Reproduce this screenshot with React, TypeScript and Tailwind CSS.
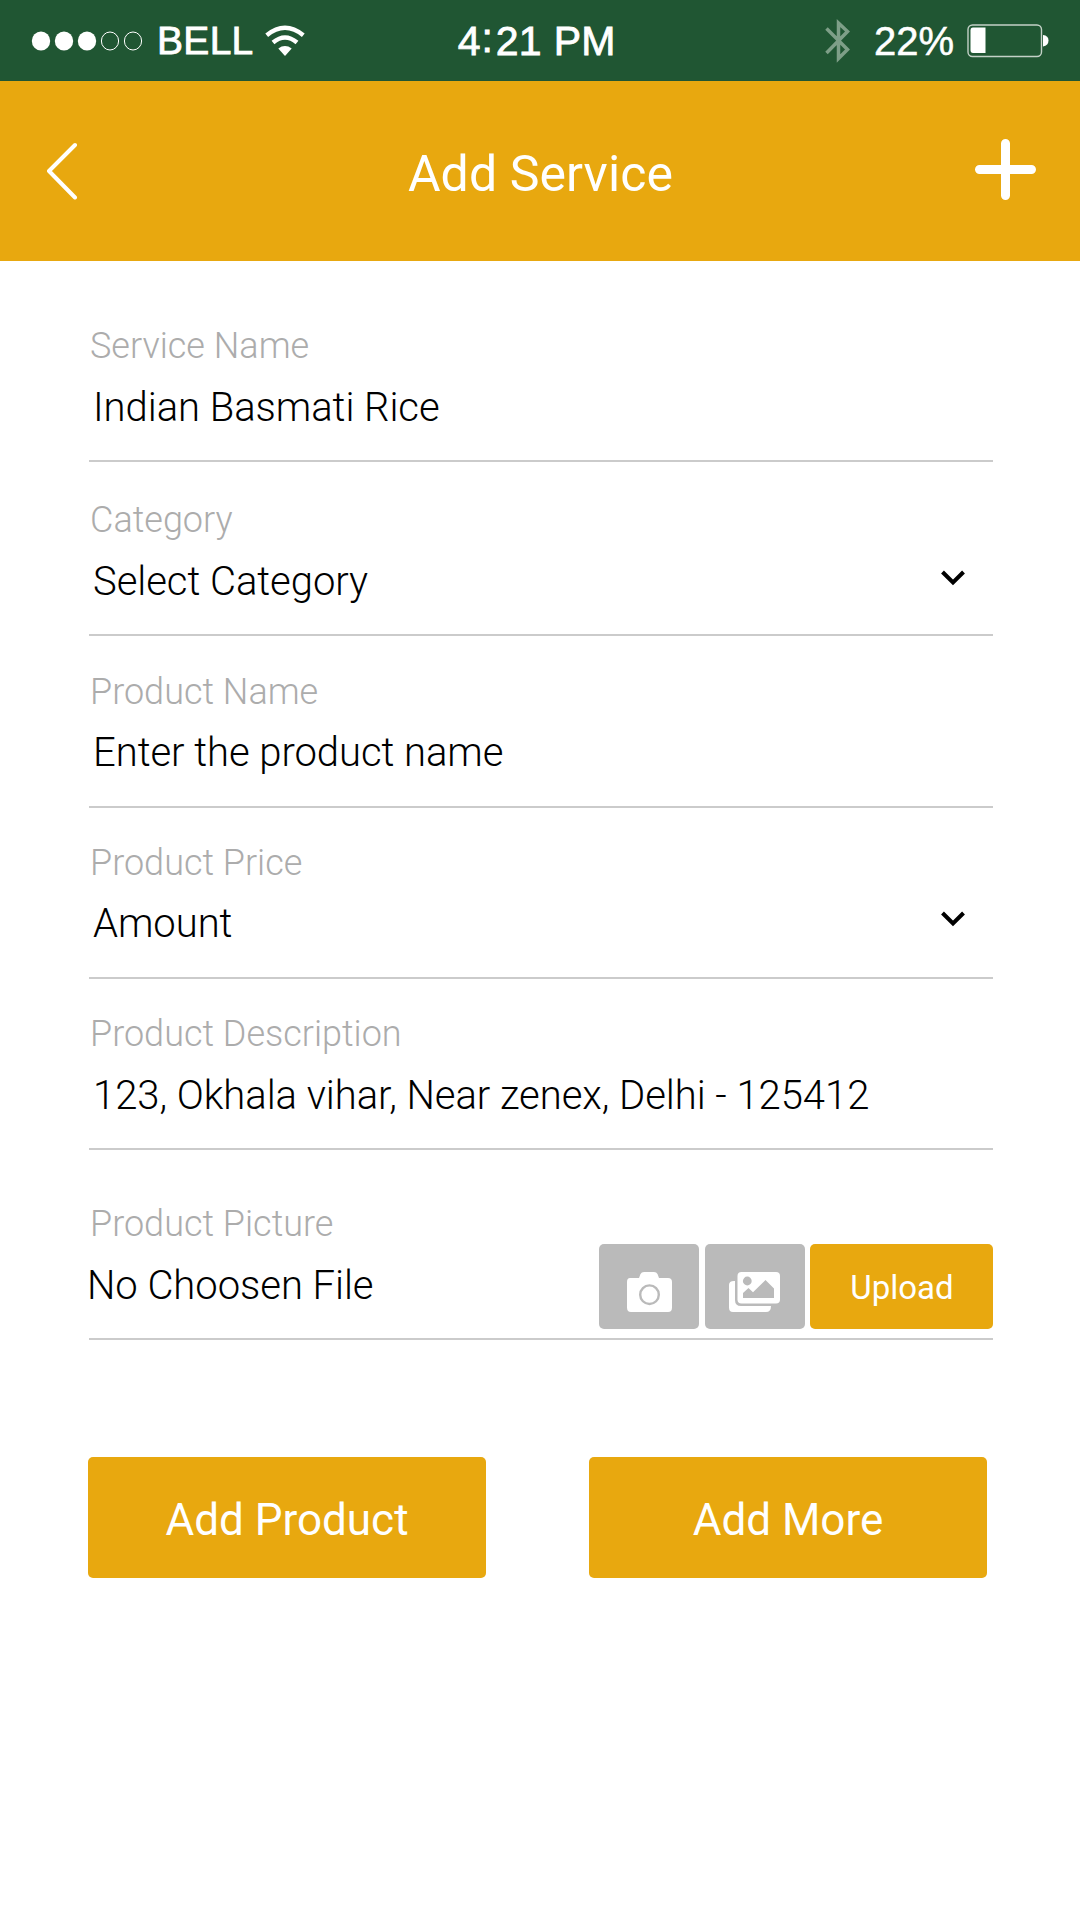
import React from 'react';

type FieldProps = {
  label: string;
  value: string;
  height: string;
  select?: boolean;
  raised?: boolean;
};

function Field({ label, value, height, select, raised }: FieldProps) {
  return (
    <div className={`flex flex-col justify-end border-b-2 border-[#cbcbcb] ${height}`}>
      <div className="pl-px text-[36px] leading-[42px] text-[#acacac] whitespace-nowrap">{label}</div>
      <div className={`flex items-start justify-between pl-[4px] pr-[28px] ${raised ? 'mt-[17px] mb-[30px]' : 'mt-[18px] mb-[29px]'}`}>
        <span className="text-[40px] leading-[46px] tracking-[-0.05px] text-black whitespace-nowrap">{value}</span>
        {select && (
          <svg className={raised ? 'mt-[10px]' : 'mt-[11px]'} width="24" height="16" viewBox="0 0 24 16" fill="none" stroke="#000" strokeWidth="4">
            <path d="M1.5 2 12 12.5 22.5 2" />
          </svg>
        )}
      </div>
    </div>
  );
}

function StatusBar() {
  return (
    <header className="flex h-[81px] items-center justify-between bg-[#205633] pl-[31px] pr-[31px] font-['Liberation_Sans',sans-serif] font-normal text-white">
      <div className="flex w-[400px] items-center">
        <svg width="112" height="20" viewBox="0 0 112 20" fill="none">
          <g fill="#fff">
            <ellipse cx="10" cy="10" rx="9.2" ry="9.6" />
            <ellipse cx="33" cy="10" rx="9.2" ry="9.6" />
            <ellipse cx="56" cy="10" rx="9.2" ry="9.6" />
          </g>
          <g stroke="#fff">
            <ellipse cx="79" cy="10" rx="8.6" ry="9" />
            <ellipse cx="102" cy="10" rx="8.6" ry="9" />
          </g>
        </svg>
        <span className="ml-[14px] w-[97px] text-[39px] leading-[44px] tracking-[0.3px] [-webkit-text-stroke:0.8px_white]">BELL</span>
        <svg className="ml-[11px]" width="40" height="32" viewBox="0 0 40 32">
          <g fill="none" stroke="#fff" strokeWidth="4.4">
            <path d="M1.7 10.3 Q20 -4.6 38.3 10.3" />
            <path d="M8 17.5 Q20 7.4 32 17.5" />
          </g>
          <path d="M13.3 23.4 Q20 18.5 26.7 23.4 L20 31Z" fill="#fff" />
        </svg>
      </div>
      <span className="mr-[7px] text-[41px] leading-[46px] whitespace-nowrap [word-spacing:1px] [-webkit-text-stroke:0.8px_white]">
        4<span className="mr-[3px] ml-px inline-block -translate-y-[3px]">:</span>21 PM
      </span>
      <div className="flex w-[400px] items-center justify-end">
        <svg width="26" height="46" viewBox="0 0 26 46" fill="none" stroke="#7e9f88" strokeWidth="3.5">
          <path d="M1.5 10.500 22.500 31.500 13.500 40.500V5L22.500 13.500 1.500 35" />
        </svg>
        <span className="ml-[23px] w-[80px] text-[40px] leading-[46px] whitespace-nowrap [-webkit-text-stroke:0.5px_white]">22%</span>
        <svg className="ml-[13px]" width="82" height="34" viewBox="0 0 82 34">
          <rect x="1" y="1" width="73.500" height="31.500" rx="4.500" fill="none" stroke="#c3d1c7" strokeWidth="1.400" />
          <path d="M6 3.500H18.500V29H6Q3.500 29 3.500 26V6.500Q3.500 3.500 6 3.500Z" fill="#fff" />
          <path d="M76 11Q81.500 11.500 81.500 16.500T76 22.500Z" fill="#fff" />
        </svg>
      </div>
    </header>
  );
}

function NavBar() {
  return (
    <nav className="flex h-[180px] items-center justify-between bg-[#e8a80f] pl-[46px] pr-[43px] text-white">
      <svg width="33" height="58" viewBox="0 0 33 58" fill="none" stroke="#fff" strokeWidth="4" strokeLinecap="round" strokeLinejoin="round">
        <path d="M29 3 3 29 29 55.500" />
      </svg>
      <h1 className="mt-[6px] ml-[28px] text-[50px] leading-[58px] font-normal tracking-[0.1px] whitespace-nowrap">Add Service</h1>
      <svg className="-mt-[4px]" width="63" height="63" viewBox="0 0 63 63" fill="none" stroke="#fff" strokeWidth="9" strokeLinecap="round">
        <path d="M31.500 5.500V57.500M5.500 31.500H57.500" />
      </svg>
    </nav>
  );
}

function CameraIcon() {
  return (
    <svg width="46" height="42" viewBox="0 0 46 42">
      <path
        d="M4 7H13L14.500 3Q15.500 1 18 1H28Q30.500 1 31.500 3L33 7H42Q46 7 46 11V36.500Q46 41 42 41H5Q1 41 1 36.500V11Q1 7 4 7Z"
        fill="#fff"
      />
      <circle cx="23.500" cy="23.700" r="9.300" fill="none" stroke="#bababa" strokeWidth="2.400" />
    </svg>
  );
}

function GalleryIcon() {
  return (
    <svg width="52" height="42" viewBox="0 0 52 42">
      <path d="M6 10Q1 10 1 14V36.500Q1 41 5 41H38Q43 41 43 35H13Q7 35 7 29V10Z" fill="#fff" />
      <rect x="9.500" y="1" width="42.500" height="31.500" rx="4" fill="#fff" />
      <g fill="#bababa">
        <circle cx="19.300" cy="10" r="4.400" />
        <path d="M15 27V22L20.500 17 25 21.300 37.500 9 46 17.500V27Z" />
      </g>
    </svg>
  );
}

function PictureField() {
  return (
    <div className="flex h-[190px] items-end justify-between border-b-2 border-[#cbcbcb]">
      <div className="mb-[29px]">
        <div className="pl-px text-[36px] leading-[42px] text-[#acacac] whitespace-nowrap">Product Picture</div>
        <div className="-ml-[2px] mt-[18px] text-[40px] leading-[46px] tracking-[-0.05px] text-black whitespace-nowrap">No Choosen File</div>
      </div>
      <div className="mb-[9px] flex h-[85px]">
        <button className="flex w-[100px] items-start justify-center rounded-[5px] bg-[#bababa] pt-[27px]">
          <CameraIcon />
        </button>
        <button className="ml-[6px] flex w-[100px] items-start justify-center rounded-[5px] bg-[#bababa] pt-[27px] pr-[3px]">
          <GalleryIcon />
        </button>
        <button className="ml-[5px] w-[183px] rounded-[5px] bg-[#e8a80f] pt-[2px] pl-px text-[33px] font-normal text-white">Upload</button>
      </div>
    </div>
  );
}

export default function App() {
  return (
    <div className="h-[1920px] w-[1080px] overflow-hidden bg-white font-['Roboto',sans-serif] font-light">
      <StatusBar />
      <NavBar />
      <main className="flex flex-col pl-[89px] pr-[87px]">
        <Field label="Service Name" value="Indian Basmati Rice" height="h-[201px]" />
        <Field label="Category" value="Select Category" height="h-[174px]" select />
        <Field label="Product Name" value="Enter the product name" height="h-[172px]" raised />
        <Field label="Product Price" value="Amount" height="h-[171px]" select raised />
        <Field label="Product Description" value="123, Okhala vihar, Near zenex, Delhi - 125412" height="h-[171px]" />
        <PictureField />
        <div className="mt-[117px] -ml-px flex gap-[103px] text-[44px] text-white">
          <button className="h-[121px] w-[398px] rounded-[5px] bg-[#e8a80f] pt-[5px] font-normal">Add Product</button>
          <button className="h-[121px] w-[398px] rounded-[5px] bg-[#e8a80f] pt-[5px] font-normal">Add More</button>
        </div>
      </main>
    </div>
  );
}
